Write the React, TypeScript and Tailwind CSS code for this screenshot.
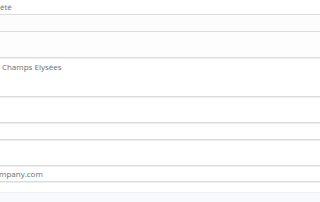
export default function App() {
  const row = "border-b border-[#dcdcdc] shadow-[0_1px_0_#efefef] flex overflow-hidden";
  return (
    <div
      className="w-[320px] h-[202px] bg-white overflow-hidden text-[8px] text-[#6e6e6e] leading-[12px]"
      style={{ fontFamily: '"Open Sans", "Noto Sans", sans-serif' }}
    >
      <div className={`${row} h-[15px] items-center`}>
        <span className="whitespace-nowrap">été</span>
      </div>
      <div className={`${row} h-[17px] bg-[#fcfcfc]`} />
      <div className={`${row} h-[26px] bg-[#fdfdfd]`} />
      <div className={`${row} h-[39px] items-start pt-[3px]`}>
        <span className="-ml-[4px] whitespace-nowrap">s Champs Elysées</span>
      </div>
      <div className={`${row} h-[26px]`} />
      <div className={`${row} h-[17px]`} />
      <div className={`${row} h-[26px]`} />
      <div className={`${row} h-[16px] items-center`}>
        <span className="-ml-[1px] whitespace-nowrap">mpany.com</span>
      </div>
      <div className="h-[10px]" />
      <div className="h-[10px] bg-[#f7f9fc] border-t border-[#eef1f5]" />
    </div>
  );
}
